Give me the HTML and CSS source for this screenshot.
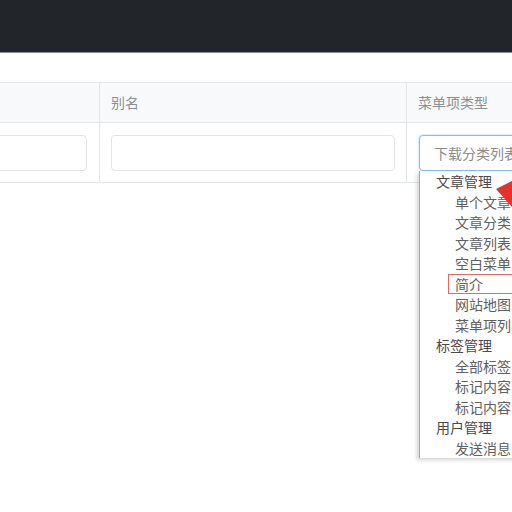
FILE: index.html
```html
<!DOCTYPE html>
<html lang="zh-CN">
<head>
<meta charset="utf-8">
<title>菜单项</title>
<link rel="stylesheet" href="styles.css">
</head>
<body>
<header class="topbar"></header>
<main class="content">
  <div class="table">
    <div class="row head">
      <div class="cell c1"></div>
      <div class="cell c2">别名</div>
      <div class="cell c3">菜单项类型</div>
    </div>
    <div class="row body">
      <div class="cell c1"><div class="input first"></div></div>
      <div class="cell c2"><div class="input"></div></div>
      <div class="cell c3">
        <div class="input select">下载分类列表</div>
        <ul class="dropdown">
          <li class="group">文章管理</li>
          <li class="opt">单个文章</li>
          <li class="opt">文章分类</li>
          <li class="opt">文章列表</li>
          <li class="opt">空白菜单</li>
          <li class="opt marked">简介</li>
          <li class="opt">网站地图</li>
          <li class="opt">菜单项列</li>
          <li class="group">标签管理</li>
          <li class="opt">全部标签</li>
          <li class="opt">标记内容</li>
          <li class="opt">标记内容</li>
          <li class="group">用户管理</li>
          <li class="opt">发送消息</li>
        </ul>
        <svg class="arrow" width="24" height="50" viewBox="0 0 24 50"><polygon points="0,18 24,6 24,45" fill="#e8302c"/></svg>
      </div>
    </div>
  </div>
</main>
</body>
</html>
```
FILE: styles.css
```css
html, body {
  margin: 0;
  padding: 0;
  background: #fff;
  overflow: hidden;
  width: 512px;
  height: 512px;
  font-family: "Noto Sans CJK SC", "Noto Sans", sans-serif;
  font-size: 14px;
}
.topbar {
  height: 52px;
  background: #222529;
  border-bottom: 1px solid #8a8d90;
}
.content {
  padding-top: 29px;
}
.table {
  border-top: 1px solid #e5e8eb;
  width: 760px;
}
.row {
  display: flex;
  border-bottom: 1px solid #e3e6e9;
}
.cell {
  box-sizing: border-box;
  flex: none;
}
.c1 {
  width: 100px;
  border-right: 1px solid #e3e6e9;
  padding: 0 12px 0 0;
}
.c2 {
  width: 307px;
  border-right: 1px solid #e3e6e9;
  padding: 0 11px;
}
.c3 {
  width: 300px;
  padding: 0 0 0 12px;
  position: relative;
}
.head {
  background: #f8f9fa;
  height: 39px;
}
.head .cell {
  line-height: 38px;
  color: #8a9096;
}
.head .c3 { padding-left: 11px; }
.body .cell {
  padding-top: 12px;
  padding-bottom: 11px;
}
.input {
  box-sizing: border-box;
  height: 36px;
  border: 1px solid #e2e5e8;
  border-radius: 4px;
  background: #fff;
}
.input.first {
  margin-left: -10px;
}
.input.select {
  width: 200px;
  border-color: #86bdf5;
  border-radius: 4px 0 0 4px;
  box-shadow: 0 0 0 1px rgba(150, 200, 250, 0.35);
  color: #8b8b8b;
  line-height: 34px;
  padding-left: 14px;
  font-size: 14px;
}
.dropdown {
  position: absolute;
  left: 12px;
  top: 48px;
  width: 200px;
  margin: 0;
  padding: 0;
  list-style: none;
  background: #fff;
  border-left: 1px solid #a8a8a8;
  box-shadow: -2px 2px 4px rgba(0, 0, 0, 0.18);
  height: 287px;
  overflow: hidden;
}
.dropdown li {
  height: 20.5px;
  line-height: 20.5px;
  white-space: nowrap;
  box-sizing: border-box;
}
.group {
  padding-left: 16px;
  color: #4a4a4a;
}
.opt {
  padding-left: 35px;
  color: #606060;
}
.opt.marked {
  margin-left: 28px;
  padding-left: 6px;
  border: 1px solid #e06a6a;
  line-height: 18.5px;
}
.arrow {
  position: absolute;
  left: 89px;
  top: 48px;
}
```
